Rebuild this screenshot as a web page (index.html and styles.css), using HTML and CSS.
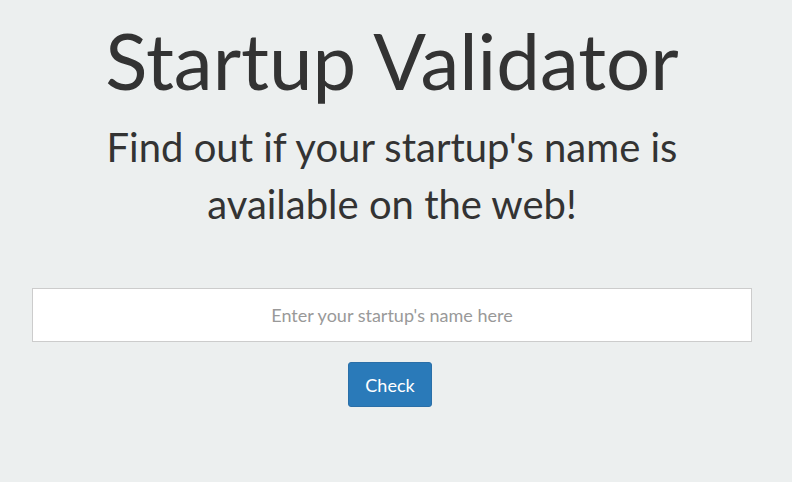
FILE: index.html
```html
<!DOCTYPE html>
<html>
<head>
<meta charset="utf-8">
<link rel="stylesheet" href="styles.css">
</head>
<body>
<main class="container">
  <h1 class="title">Startup Validator</h1>
  <p class="subtitle">Find out if your startup's name is available on the web!</p>
  <form class="check-form">
    <input class="name-input" type="text" placeholder="Enter your startup's name here">
    <button class="check-btn" type="button">Check</button>
  </form>
</main>
</body>
</html>
```
FILE: styles.css
```css
html, body {
  margin: 0;
  padding: 0;
  background: #ecefef;
  height: 100%;
}
body {
  font-family: Lato, "Open Sans", sans-serif;
  color: #333333;
}
.container {
  width: 720px;
  margin-left: 32px;
  display: flex;
  flex-direction: column;
  align-items: center;
  text-align: center;
}
.title {
  margin: 15px 0 0 0;
  font-size: 78px;
  font-weight: 400;
  line-height: 90px;
}
.subtitle {
  margin: 14px 0 0 0;
  width: 620px;
  font-size: 40px;
  line-height: 57px;
}
.check-form {
  width: 100%;
  display: flex;
  flex-direction: column;
  align-items: center;
  margin-top: 55px;
}
.name-input {
  box-sizing: border-box;
  width: 720px;
  height: 54px;
  border: 1px solid #cccccc;
  background: #fff;
  font-family: Lato, sans-serif;
  font-size: 18px;
  text-align: center;
  color: #333;
  outline: none;
}
.name-input::placeholder {
  color: #999999;
}
.check-btn {
  margin: 20px 4px 0 0;
  width: 84px;
  height: 45px;
  background: #2a7ab9;
  border: 1px solid #2a6fa8;
  border-radius: 3px;
  color: #fff;
  font-family: Lato, sans-serif;
  font-size: 18px;
}
```
